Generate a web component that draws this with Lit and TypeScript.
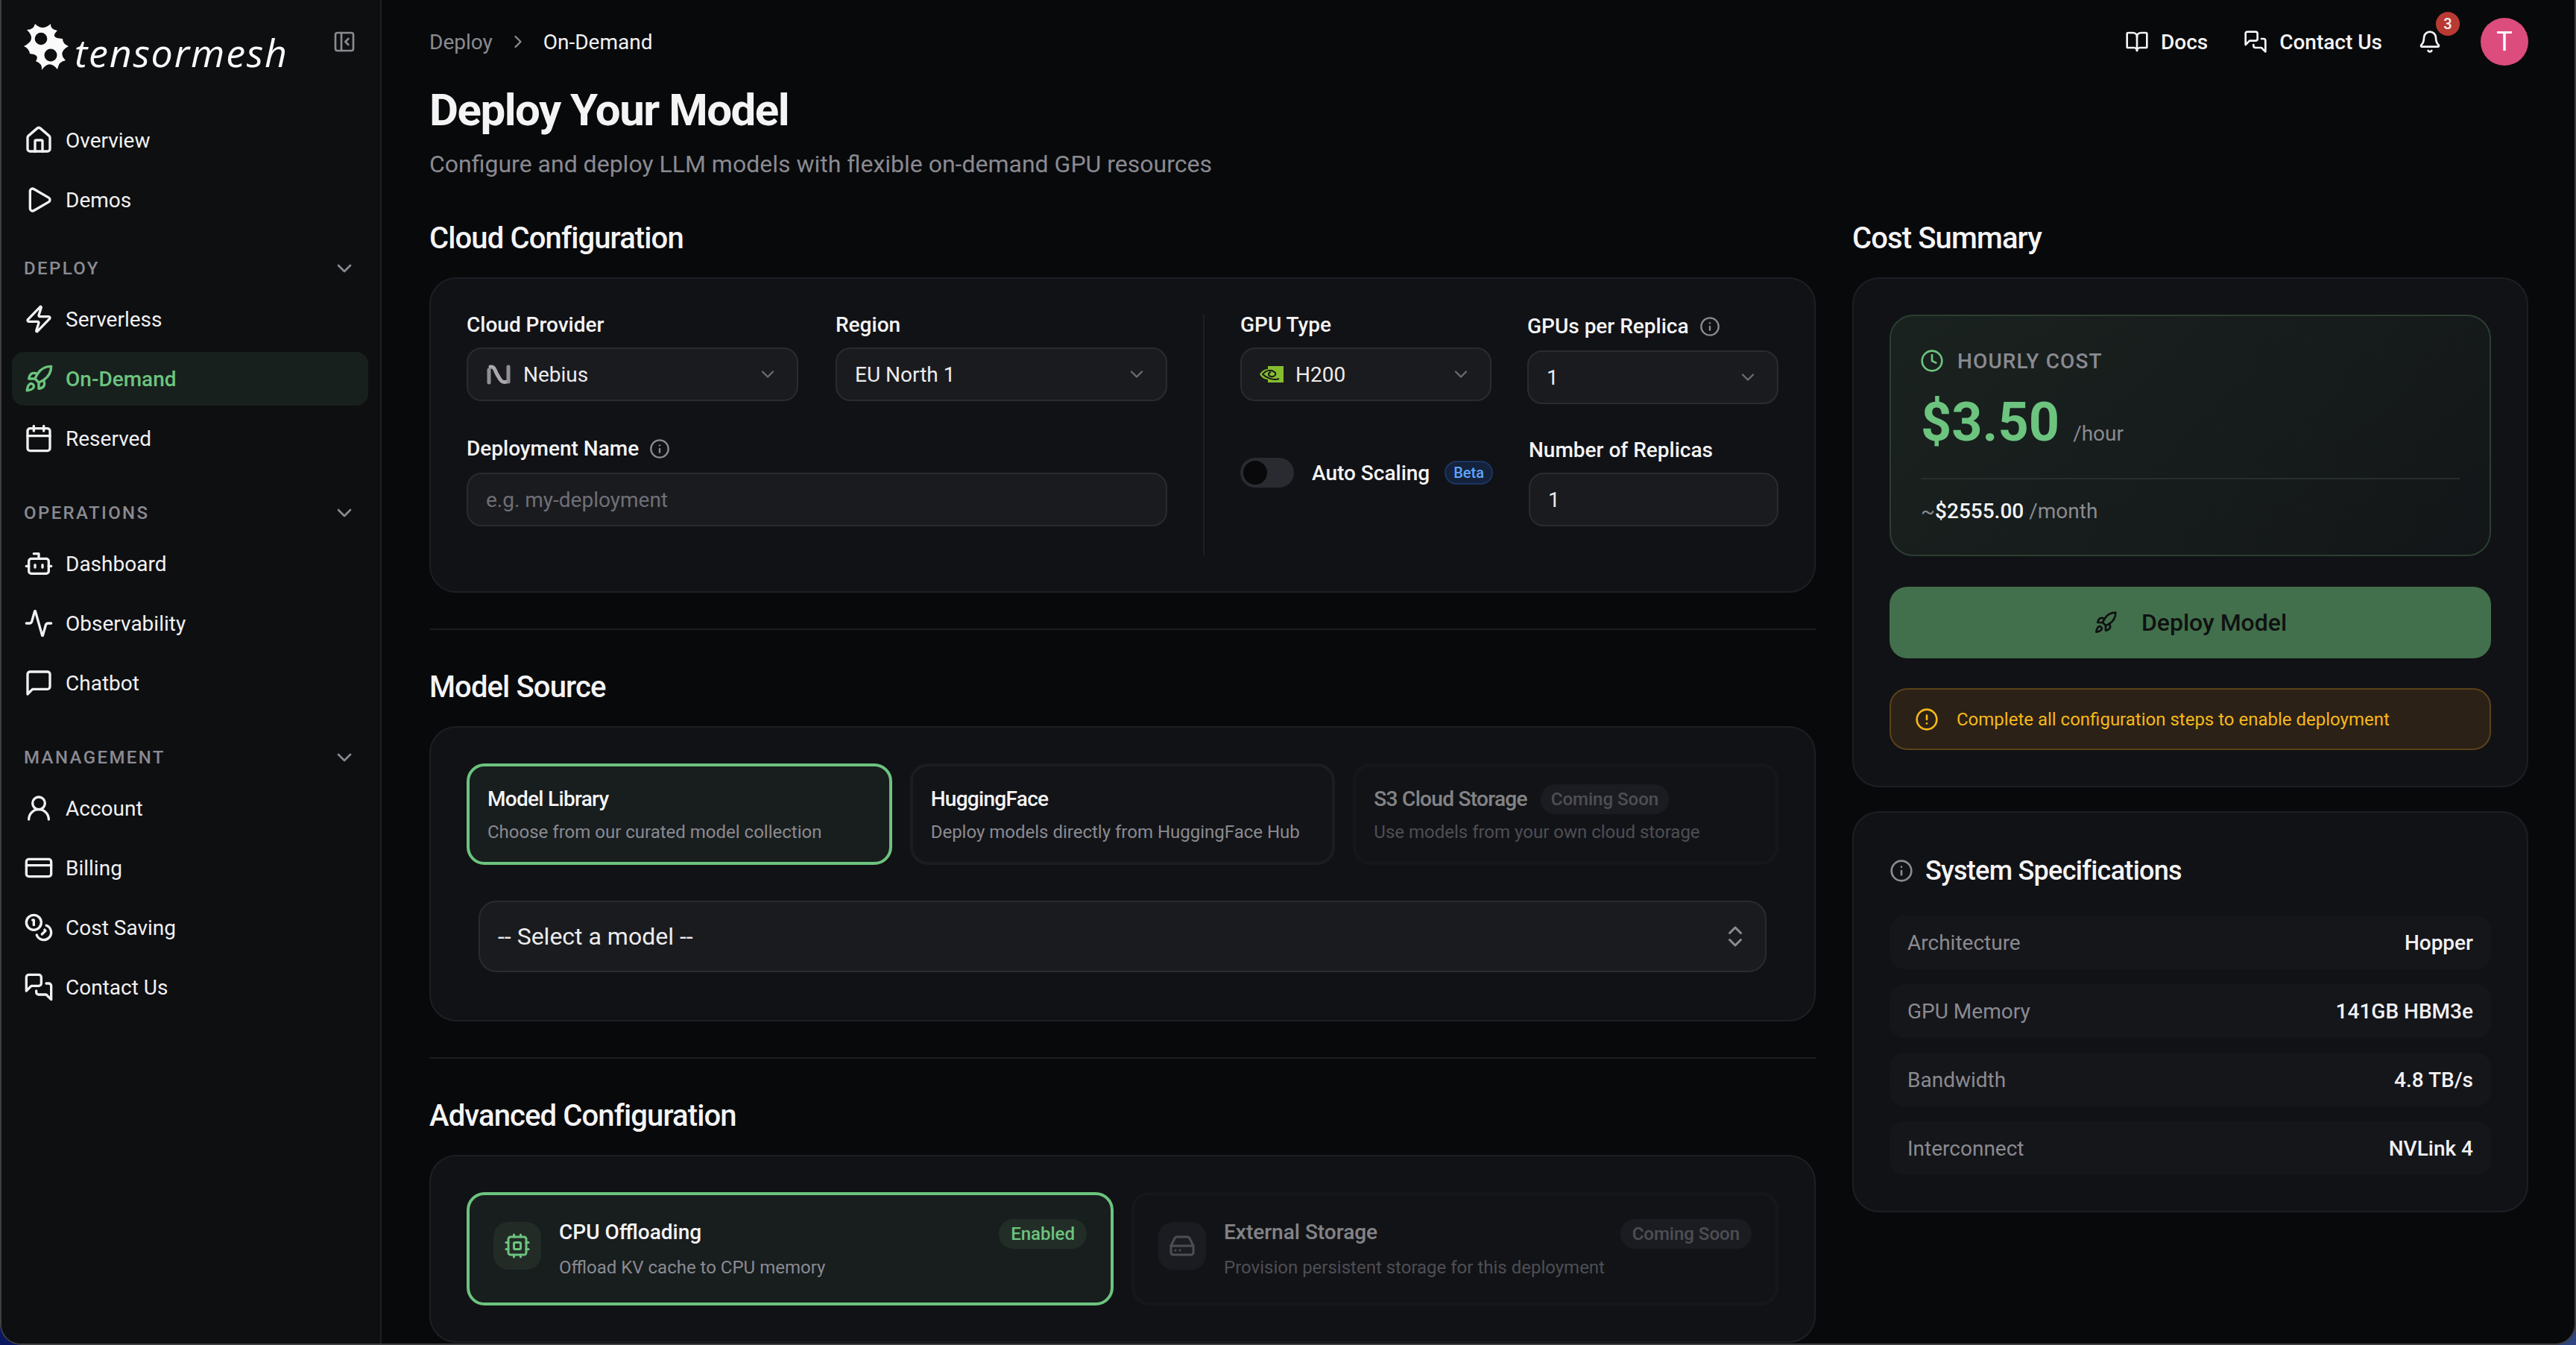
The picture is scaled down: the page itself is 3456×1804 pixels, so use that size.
import { LitElement, html, css, svg } from 'lit';
import { customElement } from 'lit/decorators.js';

// lucide-style outlines, 24 unit box
const ICONS: Record<string, unknown> = {
  house: svg`<path d="M15 21v-8a1 1 0 0 0-1-1h-4a1 1 0 0 0-1 1v8"/><path d="M3 10a2 2 0 0 1 .709-1.528l7-5.999a2 2 0 0 1 2.582 0l7 5.999A2 2 0 0 1 21 10v9a2 2 0 0 1-2 2H5a2 2 0 0 1-2-2z"/>`,
  play: svg`<path d="M5 5a2 2 0 0 1 3.008-1.728l11.997 6.998a2 2 0 0 1 .003 3.458l-12 7A2 2 0 0 1 5 19z"/>`,
  zap: svg`<path d="M4 14a1 1 0 0 1-.78-1.63l9.9-10.2a.5.5 0 0 1 .86.46l-1.92 6.02A1 1 0 0 0 13 10h7a1 1 0 0 1 .78 1.63l-9.9 10.2a.5.5 0 0 1-.86-.46l1.92-6.02A1 1 0 0 0 11 14z"/>`,
  rocket: svg`<path d="M4.5 16.5c-1.5 1.26-2 5-2 5s3.74-.5 5-2c.71-.84.7-2.13-.09-2.91a2.18 2.18 0 0 0-2.91-.09z"/><path d="m12 15-3-3a22 22 0 0 1 2-3.95A12.88 12.88 0 0 1 22 2c0 2.72-.78 7.5-6 11a22.35 22.35 0 0 1-4 2z"/><path d="M9 12H4s.55-3.03 2-4c1.62-1.08 5 0 5 0"/><path d="M12 15v5s3.03-.55 4-2c1.08-1.62 0-5 0-5"/>`,
  calendar: svg`<path d="M8 2v4"/><path d="M16 2v4"/><rect width="18" height="18" x="3" y="4" rx="2"/><path d="M3 10h18"/>`,
  bot: svg`<path d="M12 8V4H8"/><rect width="16" height="12" x="4" y="8" rx="2"/><path d="M2 14h2"/><path d="M20 14h2"/><path d="M15 13v2"/><path d="M9 13v2"/>`,
  activity: svg`<path d="M22 12h-2.48a2 2 0 0 0-1.93 1.46l-2.35 8.36a.25.25 0 0 1-.48 0L9.24 2.18a.25.25 0 0 0-.48 0l-2.35 8.36A2 2 0 0 1 4.49 12H2"/>`,
  message: svg`<path d="M21 15a2 2 0 0 1-2 2H7l-4 4V5a2 2 0 0 1 2-2h14a2 2 0 0 1 2 2z"/>`,
  user: svg`<circle cx="12" cy="8" r="5"/><path d="M20 21a8 8 0 0 0-16 0"/>`,
  card: svg`<rect width="20" height="14" x="2" y="5" rx="2"/><line x1="2" x2="22" y1="10" y2="10"/>`,
  coins: svg`<circle cx="8" cy="8" r="6"/><path d="M18.09 10.37A6 6 0 1 1 10.34 18"/><path d="M7 6h1v4"/><path d="m16.71 13.88.7.71-2.82 2.82"/>`,
  messages: svg`<path d="M14 9a2 2 0 0 1-2 2H6l-4 4V4a2 2 0 0 1 2-2h8a2 2 0 0 1 2 2z"/><path d="M18 9h2a2 2 0 0 1 2 2v11l-4-4h-6a2 2 0 0 1-2-2v-1"/>`,
  book: svg`<path d="M12 7v14"/><path d="M3 18a1 1 0 0 1-1-1V4a1 1 0 0 1 1-1h5a4 4 0 0 1 4 4 4 4 0 0 1 4-4h5a1 1 0 0 1 1 1v13a1 1 0 0 1-1 1h-6a3 3 0 0 0-3 3 3 3 0 0 0-3-3z"/>`,
  bell: svg`<path d="M10.268 21a2 2 0 0 0 3.464 0"/><path d="M3.262 15.326A1 1 0 0 0 4 17h16a1 1 0 0 0 .74-1.673C19.41 13.956 18 12.499 18 8A6 6 0 0 0 6 8c0 4.499-1.411 5.956-2.738 7.326"/>`,
  panel: svg`<rect width="18" height="18" x="3" y="3" rx="2"/><path d="M9 3v18"/><path d="m16 15-3-3 3-3"/>`,
  down: svg`<path d="m6 9 6 6 6-6"/>`,
  right: svg`<path d="m9 18 6-6-6-6"/>`,
  updown: svg`<path d="m7 15 5 5 5-5"/><path d="m7 9 5-5 5 5"/>`,
  info: svg`<circle cx="12" cy="12" r="10"/><path d="M12 16v-4"/><path d="M12 8h.01"/>`,
  clock: svg`<circle cx="12" cy="12" r="10"/><path d="M12 6v6l4 2"/>`,
  alert: svg`<circle cx="12" cy="12" r="10"/><line x1="12" x2="12" y1="8" y2="12"/><line x1="12" x2="12.01" y1="16" y2="16"/>`,
  cpu: svg`<rect width="16" height="16" x="4" y="4" rx="2"/><rect width="6" height="6" x="9" y="9" rx="1"/><path d="M15 2v2"/><path d="M15 20v2"/><path d="M2 15h2"/><path d="M2 9h2"/><path d="M20 15h2"/><path d="M20 9h2"/><path d="M9 2v2"/><path d="M9 20v2"/>`,
  drive: svg`<line x1="22" x2="2" y1="12" y2="12"/><path d="M5.45 5.11 2 12v6a2 2 0 0 0 2 2h16a2 2 0 0 0 2-2v-6l-3.45-6.89A2 2 0 0 0 16.76 4H7.24a2 2 0 0 0-1.79 1.11z"/><line x1="6" x2="6.01" y1="16" y2="16"/><line x1="10" x2="10.01" y1="16" y2="16"/>`,
};

const icon = (name: string, cls = '') =>
  html`<svg class="ic ${cls}" viewBox="0 0 24 24" fill="none" stroke="currentColor" stroke-width="2" stroke-linecap="round" stroke-linejoin="round">${ICONS[name]}</svg>`;

const NAV = [
  { items: [['house', 'Overview'], ['play', 'Demos']] },
  { title: 'DEPLOY', items: [['zap', 'Serverless'], ['rocket', 'On-Demand'], ['calendar', 'Reserved']] },
  { title: 'OPERATIONS', items: [['bot', 'Dashboard'], ['activity', 'Observability'], ['message', 'Chatbot']] },
  { title: 'MANAGEMENT', items: [['user', 'Account'], ['card', 'Billing'], ['coins', 'Cost Saving'], ['messages', 'Contact Us']] },
];

const SPECS = [
  ['Architecture', 'Hopper'],
  ['GPU Memory', '141GB HBM3e'],
  ['Bandwidth', '4.8 TB/s'],
  ['Interconnect', 'NVLink 4'],
];

@customElement('app-root')
export class AppRoot extends LitElement {
  static styles = css`
    :host {
      display: block;
      height: 1804px;
      overflow: hidden;
      background: linear-gradient(90deg, #0a1660, #2f4580);
      color: #f4f4f5;
      font-family: Roboto, 'Liberation Sans', sans-serif;
      font-size: 28px;
    }
    * { box-sizing: border-box; }
    .ic { width: 40px; height: 40px; flex: none; display: block; }
    .shell {
      display: flex;
      height: 1804px;
      background: #08090b;
      border: 2px solid #3f3f42;
      border-top: 0;
      border-radius: 0 0 28px 28px;
      overflow: hidden;
    }

    /* sidebar */
    .side {
      width: 510px;
      flex: none;
      background: #0e0f11;
      border-right: 2px solid #1e1f23;
      padding: 0 16px 0 14px;
    }
    .brand { height: 152px; display: flex; align-items: flex-start; position: relative; }
    .mark { width: 60px; height: 62px; margin: 32px 0 0 16px; flex: none; display: block; }
    .word {
      font-family: 'Open Sans', sans-serif;
      font-style: italic;
      font-size: 52px;
      letter-spacing: 1.8px;
      line-height: 60px;
      margin: 40px 0 0 8px;
      color: #fafafa;
    }
    .collapse { position: absolute; top: 40px; left: 430px; width: 32px; height: 32px; color: #8a8a91; }
    .group { margin-bottom: 32px; }
    .group.first { margin-bottom: 24px; }
    .ghead {
      height: 64px;
      display: flex;
      align-items: center;
      justify-content: space-between;
      padding: 0 16px;
      font-size: 24px;
      font-weight: 500;
      letter-spacing: 0.1em;
      color: #8a8a91;
    }
    .ghead .ic { width: 32px; height: 32px; }
    .items { display: flex; flex-direction: column; gap: 8px; }
    .item {
      height: 72px;
      display: flex;
      align-items: center;
      gap: 16px;
      padding: 0 16px;
      border-radius: 16px;
      color: #f1f1f3;
    }
    .item.on { background: #18201d; color: #6cc47e; font-weight: 500; }

    /* main */
    .main { flex: 1; min-width: 0; padding: 0 62px 0 64px; }
    .top { height: 112px; display: flex; align-items: center; }
    .crumb { display: flex; align-items: center; color: #8a8a91; }
    .crumb .ic { width: 28px; height: 28px; margin: 0 20px; }
    .crumb b { font-weight: 400; color: #f1f1f3; }
    .tools { margin-left: auto; display: flex; align-items: center; font-weight: 500; }
    .link { display: flex; align-items: center; gap: 16px; margin-right: 48px; }
    .link .ic { width: 32px; height: 32px; }
    .bell { position: relative; width: 32px; height: 32px; margin-right: 52px; margin-left: 0; }
    .bell .ic { width: 32px; height: 32px; }
    .badge {
      position: absolute;
      top: -24px;
      left: 24px;
      width: 32px;
      height: 32px;
      border-radius: 50%;
      background: #b93a32;
      font-size: 20px;
      font-weight: 500;
      display: flex;
      align-items: center;
      justify-content: center;
    }
    .avatar {
      width: 64px;
      height: 64px;
      border-radius: 50%;
      background: #dc4c7c;
      display: flex;
      align-items: center;
      justify-content: center;
      font-size: 36px;
      font-weight: 400;
      color: #fff;
    }
    h1 { margin: 0 0 -2px; font-size: 60px; line-height: 72px; font-weight: 700; letter-spacing: -0.025em; }
    .sub { margin: 14px 0 47px; font-size: 32px; line-height: 48px; color: #8a8a91; }
    .grid { display: grid; grid-template-columns: 1860px 907px; column-gap: 49px; }
    h2 { margin: 0 0 23px; font-size: 40px; line-height: 58px; font-weight: 500; letter-spacing: -0.022em; }
    .card {
      background: #111216;
      border: 2px solid #1e1f24;
      border-radius: 36px;
      padding: 48px;
    }
    .sep { height: 2px; background: #1c1d21; margin: 48px 0 48px; }

    /* fields */
    .cloud { display: flex; height: 423px; }
    .left { width: 940px; flex: none; display: grid; grid-template-columns: 445px 445px; column-gap: 50px; align-content: start; }
    .vline { width: 2px; flex: none; background: #1e1f24; margin: 0 48px; }
    .right { flex: 1; display: grid; grid-template-columns: 337px 337px; column-gap: 48px; align-content: start; }
    .field { display: flex; flex-direction: column; }
    .field.wide { grid-column: 1 / 3; margin-top: 50px; }
    .label { height: 28px; line-height: 28px; margin-bottom: 16px; font-weight: 500; display: flex; align-items: center; gap: 14px; white-space: nowrap; }
    .label.tall { height: 32px; margin-bottom: 16px; }
    .field.wide .label { margin-bottom: 18px; }
    .label .ic { width: 28px; height: 28px; color: #8a8a91; }
    .box {
      height: 72px;
      display: flex;
      align-items: center;
      gap: 16px;
      padding: 0 24px;
      background: #1a1b1f;
      border: 2px solid #2a2b30;
      border-radius: 20px;
      color: #ececee;
    }
    .box .chev { width: 28px; height: 28px; margin-left: auto; margin-right: 1px; color: #6b6b72; }
    .box.ph { color: #6f6f76; }
    .auto { display: flex; align-items: center; gap: 24px; margin-top: 72px; align-self: start; white-space: nowrap; }
    .knob-track { width: 72px; height: 40px; border-radius: 20px; background: #2a2b30; padding: 4px; flex: none; }
    .knob { width: 32px; height: 32px; border-radius: 50%; background: #09090b; }
    .auto span { font-weight: 500; }
    .beta {
      margin-left: -4px;
      height: 32px;
      padding: 0 10px;
      font-size: 20px;
      line-height: 28px;
      border-radius: 16px;
      background: #14223c;
      border: 2px solid #1c3563;
      color: #60a5fa;
    }
    .auto .beta { font-weight: 500; }
    .repl { margin-top: 48px; margin-left: 2px; }

    /* source */
    .opts { display: grid; grid-template-columns: repeat(3, minmax(0, 1fr)); gap: 24px; }
    .opts.two { grid-template-columns: repeat(2, minmax(0, 1fr)); }
    .opt { border: 4px solid #1c1d22; border-radius: 24px; background: #131418; height: 136px; padding: 28px 24px; }
    .opt.on { border-color: #6cc47e; background: #181d1e; }
    .opt.off { opacity: 0.5; }
    .otitle { font-weight: 500; letter-spacing: -0.025em; height: 32px; line-height: 32px; display: flex; align-items: center; gap: 18px; white-space: nowrap; }
    .odesc { font-size: 24px; line-height: 32px; margin-top: 12px; color: #8a8a91; white-space: nowrap; }
    .pill { height: 40px; padding: 0 14px; border-radius: 20px; font-size: 24px; font-weight: 500; letter-spacing: 0; line-height: 40px; background: #26272c; color: #8a8a91; flex: none; }
    .pick {
      margin: 48px 16px 16px;
      height: 96px;
      display: flex;
      align-items: center;
      justify-content: space-between;
      padding: 0 22px 0 24px;
      background: #1a1b1f;
      border: 2px solid #2a2b30;
      border-radius: 24px;
      font-size: 32px;
      color: #ececee;
    }
    .pick .ic { width: 36px; height: 36px; color: #8a8a91; }
    .adv { height: 152px; padding: 32px; display: flex; gap: 24px; }
    .adv .tile { width: 64px; height: 64px; border-radius: 20px; background: #232b27; color: #6cc47e; display: flex; align-items: center; justify-content: center; margin-top: 4px; flex: none; }
    .adv .tile .ic { width: 36px; height: 36px; }
    .adv .body { flex: 1; min-width: 0; }
    .adv .otitle { font-weight: 500; letter-spacing: 0; justify-content: space-between; align-items: flex-start; height: 40px; line-height: 36px; }
    .adv .odesc { margin-top: 10px; line-height: 30px; }
    .adv .pill { padding: 0 16px; }
    .pill.green { background: #232d27; color: #6cc47e; }
    .adv.off .tile { background: #26272c; color: #8a8a91; }

    /* cost */
    .cost { background: linear-gradient(135deg, #1a221f, #131618); border: 2px solid #2b3f31; border-radius: 32px; padding: 40px; height: 324px; }
    .chead { display: flex; align-items: center; gap: 18px; color: #8a8a91; font-weight: 500; letter-spacing: 0.04em; height: 40px; }
    .chead .ic { width: 32px; height: 32px; color: #6cc47e; margin-left: -1px; }
    .price { display: flex; align-items: baseline; gap: 18px; margin-top: 29px; height: 68px; color: #8a8a91; line-height: 68px; }
    .price b { font-size: 72px; font-weight: 700; color: #6cc47e; }
    .cline { height: 2px; background: #262d2b; margin: 40px 0 23px; }
    .month { color: #8a8a91; line-height: 40px; }
    .month b { color: #f4f4f5; font-weight: 500; }
    .deploy {
      margin-top: 41px;
      height: 96px;
      border-radius: 24px;
      background: #43704c;
      color: #0f1112;
      font-size: 32px;
      font-weight: 500;
      display: flex;
      align-items: center;
      justify-content: center;
      gap: 32px;
    }
    .deploy .ic { width: 32px; height: 32px; }
    .warn {
      margin-top: 40px;
      height: 83px;
      border-radius: 24px;
      background: #2b2117;
      border: 2px solid #5c421b;
      color: #f5b81a;
      font-size: 24px;
      display: flex;
      align-items: center;
      gap: 24px;
      padding: 0 32px;
    }
    .warn .ic { width: 32px; height: 32px; }
    .specs { margin-top: 32px; }
    .stitle { display: flex; align-items: center; gap: 16px; font-size: 36px; font-weight: 500; letter-spacing: -0.02em; height: 52px; margin: 4px 0 34px; }
    .stitle .ic { width: 32px; height: 32px; color: #8a8a91; }
    .rows { display: flex; flex-direction: column; gap: 20px; }
    .row { height: 72px; border-radius: 20px; background: #15161a; display: flex; align-items: center; justify-content: space-between; padding: 0 24px; color: #8a8a91; }
    .row b { color: #f1f1f3; font-weight: 500; }
  `;

  private renderSide() {
    return html`<aside class="side">
      <div class="brand">
        <svg class="mark" viewBox="0 0 60 62"><path fill="#fafafa" d="M15 0Q25 10 36 0Q35 7 45 9Q34 19 52 20Q52 27 60 30Q45 38 56 49Q47 50 45 61Q34 47 24 62Q25 53 16 50Q22 41 8 40Q7 33 0 30Q18 21 4 8Q13 8 15 0Z"/><circle cx="23" cy="20" r="8.3" fill="#0e0f11"/><circle cx="36" cy="42" r="8.5" fill="#0e0f11"/></svg>
        <span class="word">tensormesh</span>
        <svg class="collapse" viewBox="0 0 24 24" fill="none" stroke="currentColor" stroke-width="2" stroke-linecap="round" stroke-linejoin="round">${ICONS.panel}</svg>
      </div>
      ${NAV.map(
        (g) => html`<div class="group ${g.title ? '' : 'first'}">
          ${g.title ? html`<div class="ghead">${g.title}${icon('down')}</div>` : ''}
          <div class="items">
            ${g.items.map(
              ([ic, label]) => html`<div class="item ${label === 'On-Demand' ? 'on' : ''}">${icon(ic)}<span>${label}</span></div>`,
            )}
          </div>
        </div>`,
      )}
    </aside>`;
  }

  private renderCloud() {
    return html`<div class="card cloud">
      <div class="left">
        <div class="field">
          <div class="label">Cloud Provider</div>
          <div class="box">
            <svg width="34" height="28" viewBox="0 0 34 28" fill="none" stroke="#8f8f95" stroke-width="5" stroke-linecap="round"><path d="M4 25V8" /><path stroke="#a9a9ae" d="M6 4 C12 3 12 10 16 16 C20 23 22 26 28 24"/><path d="M30 24V4"/></svg>
            <span>Nebius</span>${icon('down', 'chev')}
          </div>
        </div>
        <div class="field">
          <div class="label">Region</div>
          <div class="box"><span>EU North 1</span>${icon('down', 'chev')}</div>
        </div>
        <div class="field wide">
          <div class="label">Deployment Name ${icon('info')}</div>
          <div class="box ph">e.g. my-deployment</div>
        </div>
      </div>
      <div class="vline"></div>
      <div class="right">
        <div class="field">
          <div class="label">GPU Type</div>
          <div class="box">
            <svg width="32" height="22" viewBox="0 0 32 22"><path fill="#86bd2f" d="M11 0H32V22H11V18C5 18 2 14 0 11C2 8 5 4 11 4Z"/><path fill="none" stroke="#16171a" stroke-width="2" d="M26 17C18 20 8 15 4 11C8 6 14 4 20 8C23 11 20 15 15 14C11 13 11 9 15 8"/></svg>
            <span>H200</span>${icon('down', 'chev')}
          </div>
        </div>
        <div class="field">
          <div class="label tall">GPUs per Replica ${icon('info')}</div>
          <div class="box"><span>1</span>${icon('down', 'chev')}</div>
        </div>
        <div class="auto">
          <div class="knob-track"><div class="knob"></div></div>
          <span>Auto Scaling</span>
          <span class="beta">Beta</span>
        </div>
        <div class="field repl">
          <div class="label">Number of Replicas</div>
          <div class="box">1</div>
        </div>
      </div>
    </div>`;
  }

  private renderSource() {
    return html`<div class="card">
      <div class="opts">
        <div class="opt on"><div class="otitle">Model Library</div><div class="odesc">Choose from our curated model collection</div></div>
        <div class="opt"><div class="otitle">HuggingFace</div><div class="odesc">Deploy models directly from HuggingFace Hub</div></div>
        <div class="opt off"><div class="otitle">S3 Cloud Storage <span class="pill">Coming Soon</span></div><div class="odesc">Use models from your own cloud storage</div></div>
      </div>
      <div class="pick"><span>-- Select a model --</span>${icon('updown')}</div>
    </div>`;
  }

  private renderAdvanced() {
    return html`<div class="card">
      <div class="opts two">
        <div class="opt on adv">
          <div class="tile">${icon('cpu')}</div>
          <div class="body">
            <div class="otitle">CPU Offloading <span class="pill green">Enabled</span></div>
            <div class="odesc">Offload KV cache to CPU memory</div>
          </div>
        </div>
        <div class="opt off adv">
          <div class="tile">${icon('drive')}</div>
          <div class="body">
            <div class="otitle">External Storage <span class="pill">Coming Soon</span></div>
            <div class="odesc">Provision persistent storage for this deployment</div>
          </div>
        </div>
      </div>
    </div>`;
  }

  private renderSummary() {
    return html`<h2>Cost Summary</h2>
      <div class="card">
        <div class="cost">
          <div class="chead">${icon('clock')}HOURLY COST</div>
          <div class="price"><b>$3.50</b>/hour</div>
          <div class="cline"></div>
          <div class="month">~<b>$2555.00</b> /month</div>
        </div>
        <div class="deploy">${icon('rocket')}<span>Deploy Model</span></div>
        <div class="warn">${icon('alert')}<span>Complete all configuration steps to enable deployment</span></div>
      </div>
      <div class="card specs">
        <div class="stitle">${icon('info')}System Specifications</div>
        <div class="rows">
          ${SPECS.map(([k, v]) => html`<div class="row"><span>${k}</span><b>${v}</b></div>`)}
        </div>
      </div>`;
  }

  render() {
    return html`<div class="shell">
      ${this.renderSide()}
      <main class="main">
        <div class="top">
          <div class="crumb">Deploy${icon('right')}<b>On-Demand</b></div>
          <div class="tools">
            <div class="link">${icon('book')}Docs</div>
            <div class="link">${icon('messages')}Contact Us</div>
            <div class="bell">${icon('bell')}<span class="badge">3</span></div>
            <div class="avatar">T</div>
          </div>
        </div>
        <h1>Deploy Your Model</h1>
        <p class="sub">Configure and deploy LLM models with flexible on-demand GPU resources</p>
        <div class="grid">
          <section>
            <h2>Cloud Configuration</h2>
            ${this.renderCloud()}
            <div class="sep"></div>
            <h2>Model Source</h2>
            ${this.renderSource()}
            <div class="sep"></div>
            <h2>Advanced Configuration</h2>
            ${this.renderAdvanced()}
          </section>
          <section>${this.renderSummary()}</section>
        </div>
      </main>
    </div>`;
  }
}
